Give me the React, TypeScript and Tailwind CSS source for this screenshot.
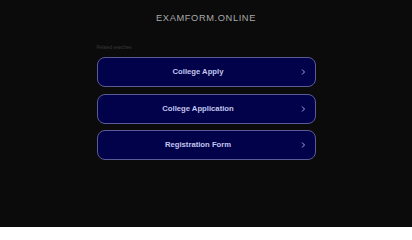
export default function App() {
  const items = ['College Apply', 'College Application', 'Registration Form']

  return (
    <div className="h-[227px] w-full bg-[#0b0b0b] font-['Liberation_Sans',Arial,sans-serif]">
      <div className="pt-[13px] text-center text-[9.3px] leading-[11px] tracking-[0.6px] text-[#a9a9a9]">
        EXAMFORM.ONLINE
      </div>

      <div className="mx-auto mt-[21px] w-[219px]">
        <p className="text-[4.5px] leading-[6px] text-[#3a3a3a]">Related searches</p>
        <div className="mt-[6px] flex flex-col gap-[6.5px]">
          {items.map((item) => (
            <div
              key={item}
              className="relative flex h-[30px] items-center justify-center rounded-[8px] border border-[#5a5a96] bg-[#02024a] pr-[16px]"
            >
              <span className="text-[7.7px] font-bold text-[#c3c6ee]">{item}</span>
              <svg
                className="absolute right-[9px] top-1/2 -translate-y-1/2"
                width="5"
                height="7"
                viewBox="0 0 5 7"
                fill="none"
              >
                <path d="M1 1l2.5 2.5L1 6" stroke="#9ea6e8" strokeWidth="1" />
              </svg>
            </div>
          ))}
        </div>
      </div>
    </div>
  )
}
